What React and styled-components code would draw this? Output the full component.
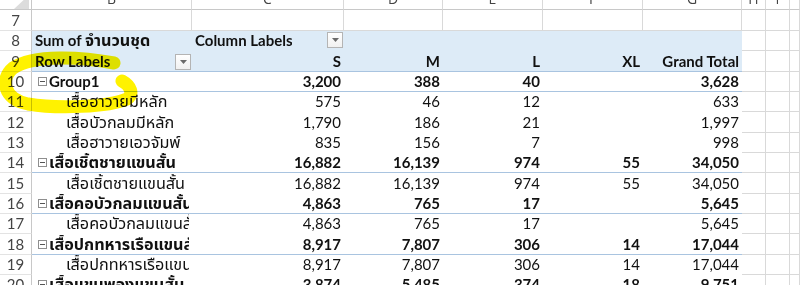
import React from 'react';
import styled, { createGlobalStyle, css } from 'styled-components';

const Global = createGlobalStyle`
  html, body { margin: 0; padding: 0; background: #fff; overflow: hidden; }
  body { font-family: Lato, "Noto Sans Thai", "Noto Sans", sans-serif; }
`;

const COLS = '32px 160px 152px 99px 100px 100px 99px 24px 24px 1fr';
const GRID = '#d9d9d9';
const BLUE = '#ddebf7';
const RULE = '#a9c4e0';

const Sheet = styled.div`
  position: relative;
  width: 800px;
  height: 285px;
  overflow: hidden;
  background: #fff;
`;

const Row = styled.div`
  display: grid;
  grid-template-columns: ${COLS};
  height: ${p => p.$h}px;
`;

const HeadCell = styled.div`
  display: flex;
  align-items: flex-end;
  justify-content: center;
  overflow: hidden;
  border-right: 1px solid ${GRID};
  border-bottom: 1px solid #c8c8c8;
  box-sizing: border-box;
  color: #444;
  font-family: "Open Sans", Lato, sans-serif;
  font-size: 14px;
  line-height: 20px;
`;

const Corner = styled(HeadCell)`
  position: relative;
  border-right: 1px solid #c8c8c8;
`;

const RowNum = styled.div`
  display: flex;
  align-items: flex-end;
  justify-content: center;
  padding-bottom: 1px;
  box-sizing: border-box;
  border-right: 1px solid #c8c8c8;
  border-bottom: 1px solid #e3e3e3;
  color: #444;
  font-size: 15px;
  line-height: 17px;
`;

const Cell = styled.div`
  display: flex;
  align-items: flex-end;
  box-sizing: border-box;
  border-right: 1px solid ${GRID};
  border-bottom: 1px solid ${GRID};
`;

const PCell = styled.div`
  display: flex;
  align-items: flex-end;
  justify-content: ${p => (p.$right ? 'flex-end' : 'flex-start')};
  box-sizing: border-box;
  min-width: 0;
  overflow: hidden;
  white-space: nowrap;
  padding: 0 3px 1px ${p => (p.$indent ? 34 : 3)}px;
  background: ${p => (p.$head ? BLUE : '#fff')};
  border-bottom: 1px solid ${p => (p.$line ? RULE : p.$head ? BLUE : '#fff')};
  color: #111;
  font-size: 15px;
  line-height: 17px;
  font-weight: ${p => (p.$bold ? 700 : 400)};
  ${p => p.$split && css`justify-content: space-between; padding-right: 1px;`}
`;

const Text = styled.span`
  overflow: hidden;
  white-space: nowrap;
  min-width: 0;
`;

const Thai = styled.span`
  font-size: 1.08em;
`;

const FilterBtn = styled.span`
  flex: none;
  width: 16px;
  height: 16px;
  margin-bottom: ${p => p.$mb}px;
  box-sizing: border-box;
  border: 1px solid #b4b4b4;
  background: linear-gradient(#ffffff, #f1f1f1);
  display: flex;
  align-items: center;
  justify-content: center;
`;

const Toggle = styled.span`
  flex: none;
  width: 9px;
  height: 9px;
  margin: 0 2px 4px 3px;
  box-sizing: border-box;
  border: 1px solid #8e8e8e;
  background: #fff;
  display: flex;
  align-items: center;
  justify-content: center;
  &::after {
    content: '';
    width: 5px;
    height: 1px;
    background: #555;
  }
`;

const Marker = styled.svg`
  position: absolute;
  left: 0;
  top: 0;
  pointer-events: none;
  mix-blend-mode: multiply;
`;

const Arrow = () => (
  <svg width="7" height="4" viewBox="0 0 7 4">
    <path d="M0 0 H7 L3.5 4 Z" fill="#6b6b6b" />
  </svg>
);

const Filter = ({ mb }) => (
  <FilterBtn $mb={mb}>
    <Arrow />
  </FilterBtn>
);

const H = 20.33;

const data = [
  { n: 10, label: 'Group1', group: true, v: ['3,200', '388', '40', '', '3,628'] },
  { n: 11, th: 'เสื้อฮาวายมีหลัก', v: ['575', '46', '12', '', '633'] },
  { n: 12, th: 'เสื้อบัวกลมมีหลัก', v: ['1,790', '186', '21', '', '1,997'] },
  { n: 13, th: 'เสื้อฮาวายเอวจัมพ์', v: ['835', '156', '7', '', '998'] },
  { n: 14, th: 'เสื้อเชิ้ตชายแขนสั้น', group: true, v: ['16,882', '16,139', '974', '55', '34,050'] },
  { n: 15, th: 'เสื้อเชิ้ตชายแขนสั้น', v: ['16,882', '16,139', '974', '55', '34,050'] },
  { n: 16, th: 'เสื้อคอบัวกลมแขนสั้น', group: true, v: ['4,863', '765', '17', '', '5,645'] },
  { n: 17, th: 'เสื้อคอบัวกลมแขนสั้น', v: ['4,863', '765', '17', '', '5,645'] },
  { n: 18, th: 'เสื้อปกทหารเรือแขนสั้น', group: true, v: ['8,917', '7,807', '306', '14', '17,044'] },
  { n: 19, th: 'เสื้อปกทหารเรือแขนสั้น', v: ['8,917', '7,807', '306', '14', '17,044'] },
  { n: 20, th: 'เสื้อแขนพองแขนสั้น', group: true, v: ['3,874', '5,485', '374', '18', '9,751'] },
];

const Tail = () => (
  <>
    <Cell />
    <Cell />
    <Cell />
  </>
);

export default function App() {
  return (
    <Sheet>
      <Global />
      <Row $h={10}>
        <Corner>
          <svg width="32" height="10" style={{ position: 'absolute', left: 0, top: 0 }}>
            <path d="M14 9 L29 -5 L29 9 Z" fill="#dcdcdc" />
          </svg>
        </Corner>
        {['B', 'C', 'D', 'E', 'F', 'G', 'H', 'I', ''].map((l, i) => (
          <HeadCell key={i}>{l}</HeadCell>
        ))}
      </Row>
      <Row $h={21}>
        <RowNum>7</RowNum>
        {Array.from({ length: 9 }).map((_, i) => (
          <Cell key={i} />
        ))}
      </Row>
      <Row $h={H}>
        <RowNum>8</RowNum>
        <PCell $head $bold>
          <Text>
            Sum of <Thai>จำนวนชุด</Thai>
          </Text>
        </PCell>
        <PCell $head $bold $split>
          <Text>Column Labels</Text>
          <Filter mb={1} />
        </PCell>
        <PCell $head />
        <PCell $head />
        <PCell $head />
        <PCell $head />
        <Tail />
      </Row>
      <Row $h={H}>
        <RowNum>9</RowNum>
        <PCell $head $bold $split $line>
          <Text>Row Labels</Text>
          <Filter mb={0} />
        </PCell>
        {['S', 'M', 'L', 'XL', 'Grand Total'].map(t => (
          <PCell key={t} $head $bold $right $line>
            {t}
          </PCell>
        ))}
        <Tail />
      </Row>
      {data.map(r => (
        <Row key={r.n} $h={H}>
          <RowNum>{r.n}</RowNum>
          <PCell $bold={r.group} $line={r.group} $indent={!r.group}>
            {r.group && <Toggle />}
            <Text>{r.th ? <Thai>{r.th}</Thai> : r.label}</Text>
          </PCell>
          {r.v.map((x, i) => (
            <PCell key={i} $right $bold={r.group} $line={r.group}>
              {x}
            </PCell>
          ))}
          <Tail />
        </Row>
      ))}
      <Marker width="150" height="130" viewBox="0 0 150 130">
        <path
          d="M114 63 C 82 57, 34 54, 13 68 C 0 79, 3 99, 28 104 C 58 109, 108 107, 127 99 C 134 94, 131 86, 122 81"
          fill="none"
          stroke="#fff200"
          strokeWidth="13"
          strokeLinecap="round"
          strokeLinejoin="round"
        />
      </Marker>
    </Sheet>
  );
}
